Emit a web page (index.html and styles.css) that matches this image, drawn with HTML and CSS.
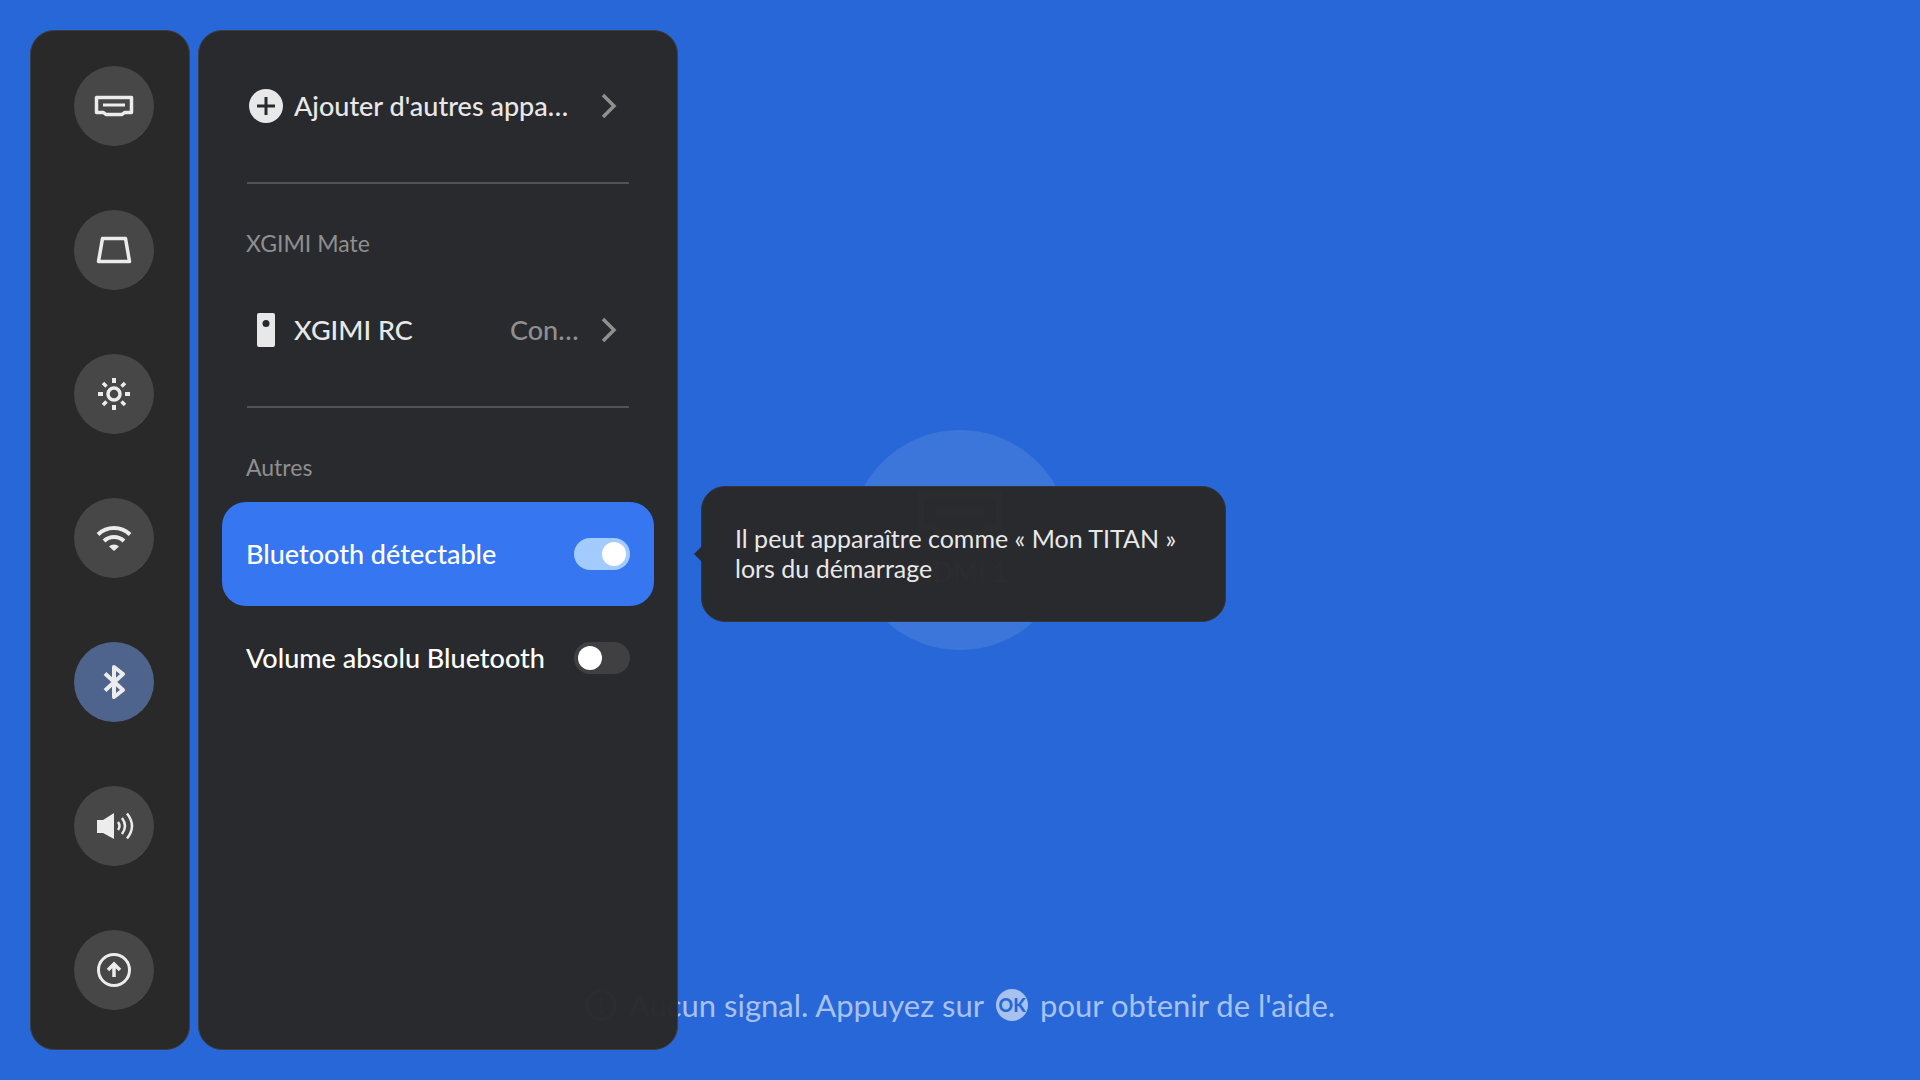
FILE: index.html
```
<!DOCTYPE html>
<html lang="fr">
<head>
    <meta charset="UTF-8">
    <meta name="viewport" content="width=device-width, initial-scale=1.0">
    <title>Bluetooth</title>
    <link rel="stylesheet" href="styles.css">
</head>
<body>
    <main class="source">
        <div class="source-badge">
            <svg width="84" height="44" viewBox="0 0 84 44" fill="none" stroke="currentColor" stroke-width="6">
                <path d="M3 3h78v32h-12l-6 6H21l-6-6H3z"/>
                <path d="M18 20h48" stroke-width="8"/>
            </svg>
            <span>HDMI 1</span>
        </div>
        <p class="hint">
            <svg width="32" height="32" viewBox="0 0 32 32" fill="none" stroke="currentColor" stroke-width="3">
                <circle cx="16" cy="16" r="14"/>
                <path d="M16 8v10M16 21v3"/>
            </svg>
            <span>Aucun signal. Appuyez sur</span>
            <span class="ok-key">OK</span>
            <span>pour obtenir de l'aide.</span>
        </p>
    </main>

    <div class="overlay">
        <nav class="sidebar">
            <button class="nav-btn" aria-label="Entrées">
                <svg width="40" height="40" viewBox="0 0 40 40" fill="none" stroke="currentColor" stroke-width="3.500" stroke-linejoin="round">
                    <path d="M2.500 11.500h35v15h-7l-2.500 2H12l-2.500-2h-7z"/>
                    <path d="M9 19h22" stroke-width="3"/>
                </svg>
            </button>
            <button class="nav-btn" aria-label="Image">
                <svg width="40" height="40" viewBox="0 0 40 40" fill="none" stroke="currentColor" stroke-width="3.500" stroke-linejoin="round">
                    <path d="M8.500 8.500h23l4 23h-31z"/>
                </svg>
            </button>
            <button class="nav-btn" aria-label="Luminosité">
                <svg width="40" height="40" viewBox="0 0 40 40" fill="none" stroke="currentColor" stroke-width="4">
                    <circle cx="20" cy="20" r="6" stroke-width="3.500"/>
                    <path d="M20 4v5M20 31v5M4 20h5M31 20h5"/>
                    <path d="M9 9l3.500 3.500M27.500 27.500L31 31M31 9l-3.500 3.500M12.500 27.500L9 31" stroke-width="3.500"/>
                </svg>
            </button>
            <button class="nav-btn" aria-label="Wi-Fi">
                <svg width="40" height="40" viewBox="0 0 40 40" fill="none" stroke="currentColor" stroke-width="4">
                    <path d="M4 16.500a23 23 0 0 1 32 0"/>
                    <path d="M10 23a14.500 14.500 0 0 1 20 0"/>
                    <path d="M15 28.500a7.500 7.500 0 0 1 10 0L20 33z" fill="currentColor" stroke="none"/>
                </svg>
            </button>
            <button class="nav-btn active" aria-label="Bluetooth" aria-current="page">
                <svg width="40" height="40" viewBox="0 0 40 40" fill="none" stroke="currentColor" stroke-width="4" stroke-linejoin="round">
                    <path d="M11 11.500L29 28l-9 7V5l9 7-18 16.500"/>
                </svg>
            </button>
            <button class="nav-btn" aria-label="Son">
                <svg width="40" height="40" viewBox="0 0 40 40" fill="none" stroke="currentColor" stroke-width="2.500">
                    <path d="M3 14h6l11-7v26l-11-6H3z" fill="currentColor" stroke="none"/>
                    <path d="M24 16q3 4 0 8M28 12q6 8 0 16M33 7.500q10 12.500 0 25"/>
                </svg>
            </button>
            <button class="nav-btn" aria-label="Mise à jour">
                <svg width="40" height="40" viewBox="0 0 40 40" fill="none" stroke="currentColor" stroke-width="3">
                    <circle cx="20" cy="20" r="15.500"/>
                    <path d="M20 27V15M14 20l6-6 6 6" stroke-width="3.500"/>
                </svg>
            </button>
        </nav>

        <section class="panel">
            <button class="row">
                <svg class="row-icon" width="34" height="34" viewBox="0 0 34 34">
                    <circle cx="17" cy="17" r="17" fill="currentColor"/>
                    <path d="M17 8v18M8 17h18" stroke="#292a2c" stroke-width="3"/>
                </svg>
                <span class="row-title">Ajouter d'autres appareils</span>
                <svg class="chevron" width="16" height="26" viewBox="0 0 16 26" fill="none" stroke="currentColor" stroke-width="3.500">
                    <path d="M2 2l11 11L2 24"/>
                </svg>
            </button>

            <hr class="divider">
            <h2 class="group-title">XGIMI Mate</h2>
            <button class="row">
                <svg class="row-icon" width="34" height="34" viewBox="0 0 34 34">
                    <rect x="8" width="18" height="34" rx="2" fill="currentColor"/>
                    <circle cx="17" cy="10.500" r="3.500" fill="#292a2c"/>
                </svg>
                <span class="row-title">XGIMI RC</span>
                <span class="row-value">Connecté</span>
                <svg class="chevron" width="16" height="26" viewBox="0 0 16 26" fill="none" stroke="currentColor" stroke-width="3.500">
                    <path d="M2 2l11 11L2 24"/>
                </svg>
            </button>

            <hr class="divider">
            <h2 class="group-title">Autres</h2>
            <div class="row selected">
                <label class="row-title" for="discoverable">Bluetooth détectable</label>
                <input class="switch" type="checkbox" id="discoverable" aria-describedby="discoverable-tip" checked>
                <div class="tooltip" id="discoverable-tip" role="tooltip">Il peut apparaître comme «&nbsp;Mon TITAN&nbsp;» lors du démarrage</div>
            </div>
            <div class="row">
                <label class="row-title" for="absolute-volume">Volume absolu Bluetooth</label>
                <input class="switch" type="checkbox" id="absolute-volume">
            </div>
        </section>
    </div>
</body>
</html>
```
FILE: styles.css
```
* {
    margin: 0;
    padding: 0;
    box-sizing: border-box;
}

body {
    font-family: Lato, "Noto Sans", sans-serif;
    background: #2867d7;
    color: #e8e8e8;
    overflow: hidden;
}

button {
    border: none;
    background: none;
    color: inherit;
    font: inherit;
    text-align: left;
    cursor: pointer;
}

svg {
    display: block;
    flex: none;
}

/* Input screen behind the menu */
.source {
    min-height: 100vh;
    display: grid;
    grid-template-rows: 1fr auto 1fr;
    justify-items: center;
}

.source-badge {
    grid-row: 2;
    width: 220px;
    height: 220px;
    border-radius: 50%;
    background: #3c76db;
    color: #a7c2ef;
    display: flex;
    flex-direction: column;
    align-items: center;
    justify-content: center;
    gap: 20px;
    font-size: 27px;
    line-height: 32px;
}

.hint {
    grid-row: 3;
    align-self: end;
    display: flex;
    align-items: center;
    gap: 12px;
    padding-bottom: 57px;
    font-size: 31px;
    line-height: 36px;
    color: #a7c2ef;
}

.ok-key {
    width: 32px;
    height: 32px;
    border-radius: 50%;
    background: #a7c2ef;
    color: #2867d7;
    font-size: 18px;
    font-weight: 900;
    line-height: 32px;
    text-align: center;
}

/* Menu */
.overlay {
    position: absolute;
    inset: 0;
    padding: 30px;
    display: flex;
    gap: 8px;
}

.sidebar,
.panel {
    border: 1px solid #3d3e42;
    border-radius: 24px;
}

.sidebar {
    width: 160px;
    padding: 35px 35px 39px 43px;
    background: #292929;
    display: flex;
    flex-direction: column;
    justify-content: space-between;
}

.nav-btn {
    width: 80px;
    height: 80px;
    border-radius: 50%;
    background: #474747;
    color: #ececec;
    display: flex;
    align-items: center;
    justify-content: center;
}

.nav-btn.active {
    background: #4f648c;
}

.panel {
    width: 480px;
    padding: 23px;
    background: rgba(41, 41, 41, 0.98);
}

.row {
    position: relative;
    width: 100%;
    height: 104px;
    padding: 0 24px;
    border-radius: 24px;
    display: flex;
    align-items: center;
    font-size: 27px;
    font-weight: 500;
    line-height: 36px;
    color: #e8e8e8;
}

.row.selected {
    background: #3676f0;
}

div.row {
    color: #fff;
}

.row-icon {
    margin: 0 11px 0 3px;
}

.row-title {
    flex: 1;
    margin-right: 8px;
    overflow: hidden;
    text-overflow: ellipsis;
    white-space: nowrap;
}

.row-value {
    width: 72px;
    overflow: hidden;
    text-overflow: ellipsis;
    white-space: nowrap;
    font-size: 27px;
    color: #8f8f90;
}

.chevron {
    margin: 0 13px 0 19px;
    color: #8f8f90;
}

.divider {
    height: 2px;
    margin: 24px 25px 0;
    border: none;
    background: #535355;
}

.group-title {
    padding: 43px 24px 19px;
    font-size: 23px;
    font-weight: 400;
    line-height: 32px;
    color: #8f8f90;
}

.switch {
    appearance: none;
    width: 56px;
    height: 32px;
    padding: 4px;
    border-radius: 16px;
    background: #404042;
    display: flex;
    cursor: pointer;
}

.switch::before {
    content: "";
    width: 24px;
    height: 24px;
    border-radius: 50%;
    background: #fff;
}

.switch:checked {
    background: #a3cbff;
    justify-content: flex-end;
}

.tooltip {
    position: absolute;
    left: calc(100% + 47px);
    top: 50%;
    transform: translateY(-50%);
    width: 525px;
    padding: 36px 33px 38px;
    border: 1px solid #33353a;
    border-radius: 24px;
    background: rgba(41, 41, 42, 0.98);
    color: #e8e8e8;
    font-size: 25px;
    font-weight: 400;
    line-height: 30px;
}

.tooltip::before {
    content: "";
    position: absolute;
    left: -8px;
    top: 50%;
    width: 8px;
    height: 16px;
    margin-top: -8px;
    background: #292a2d;
    clip-path: polygon(0 50%, 100% 0, 100% 100%);
}
```
